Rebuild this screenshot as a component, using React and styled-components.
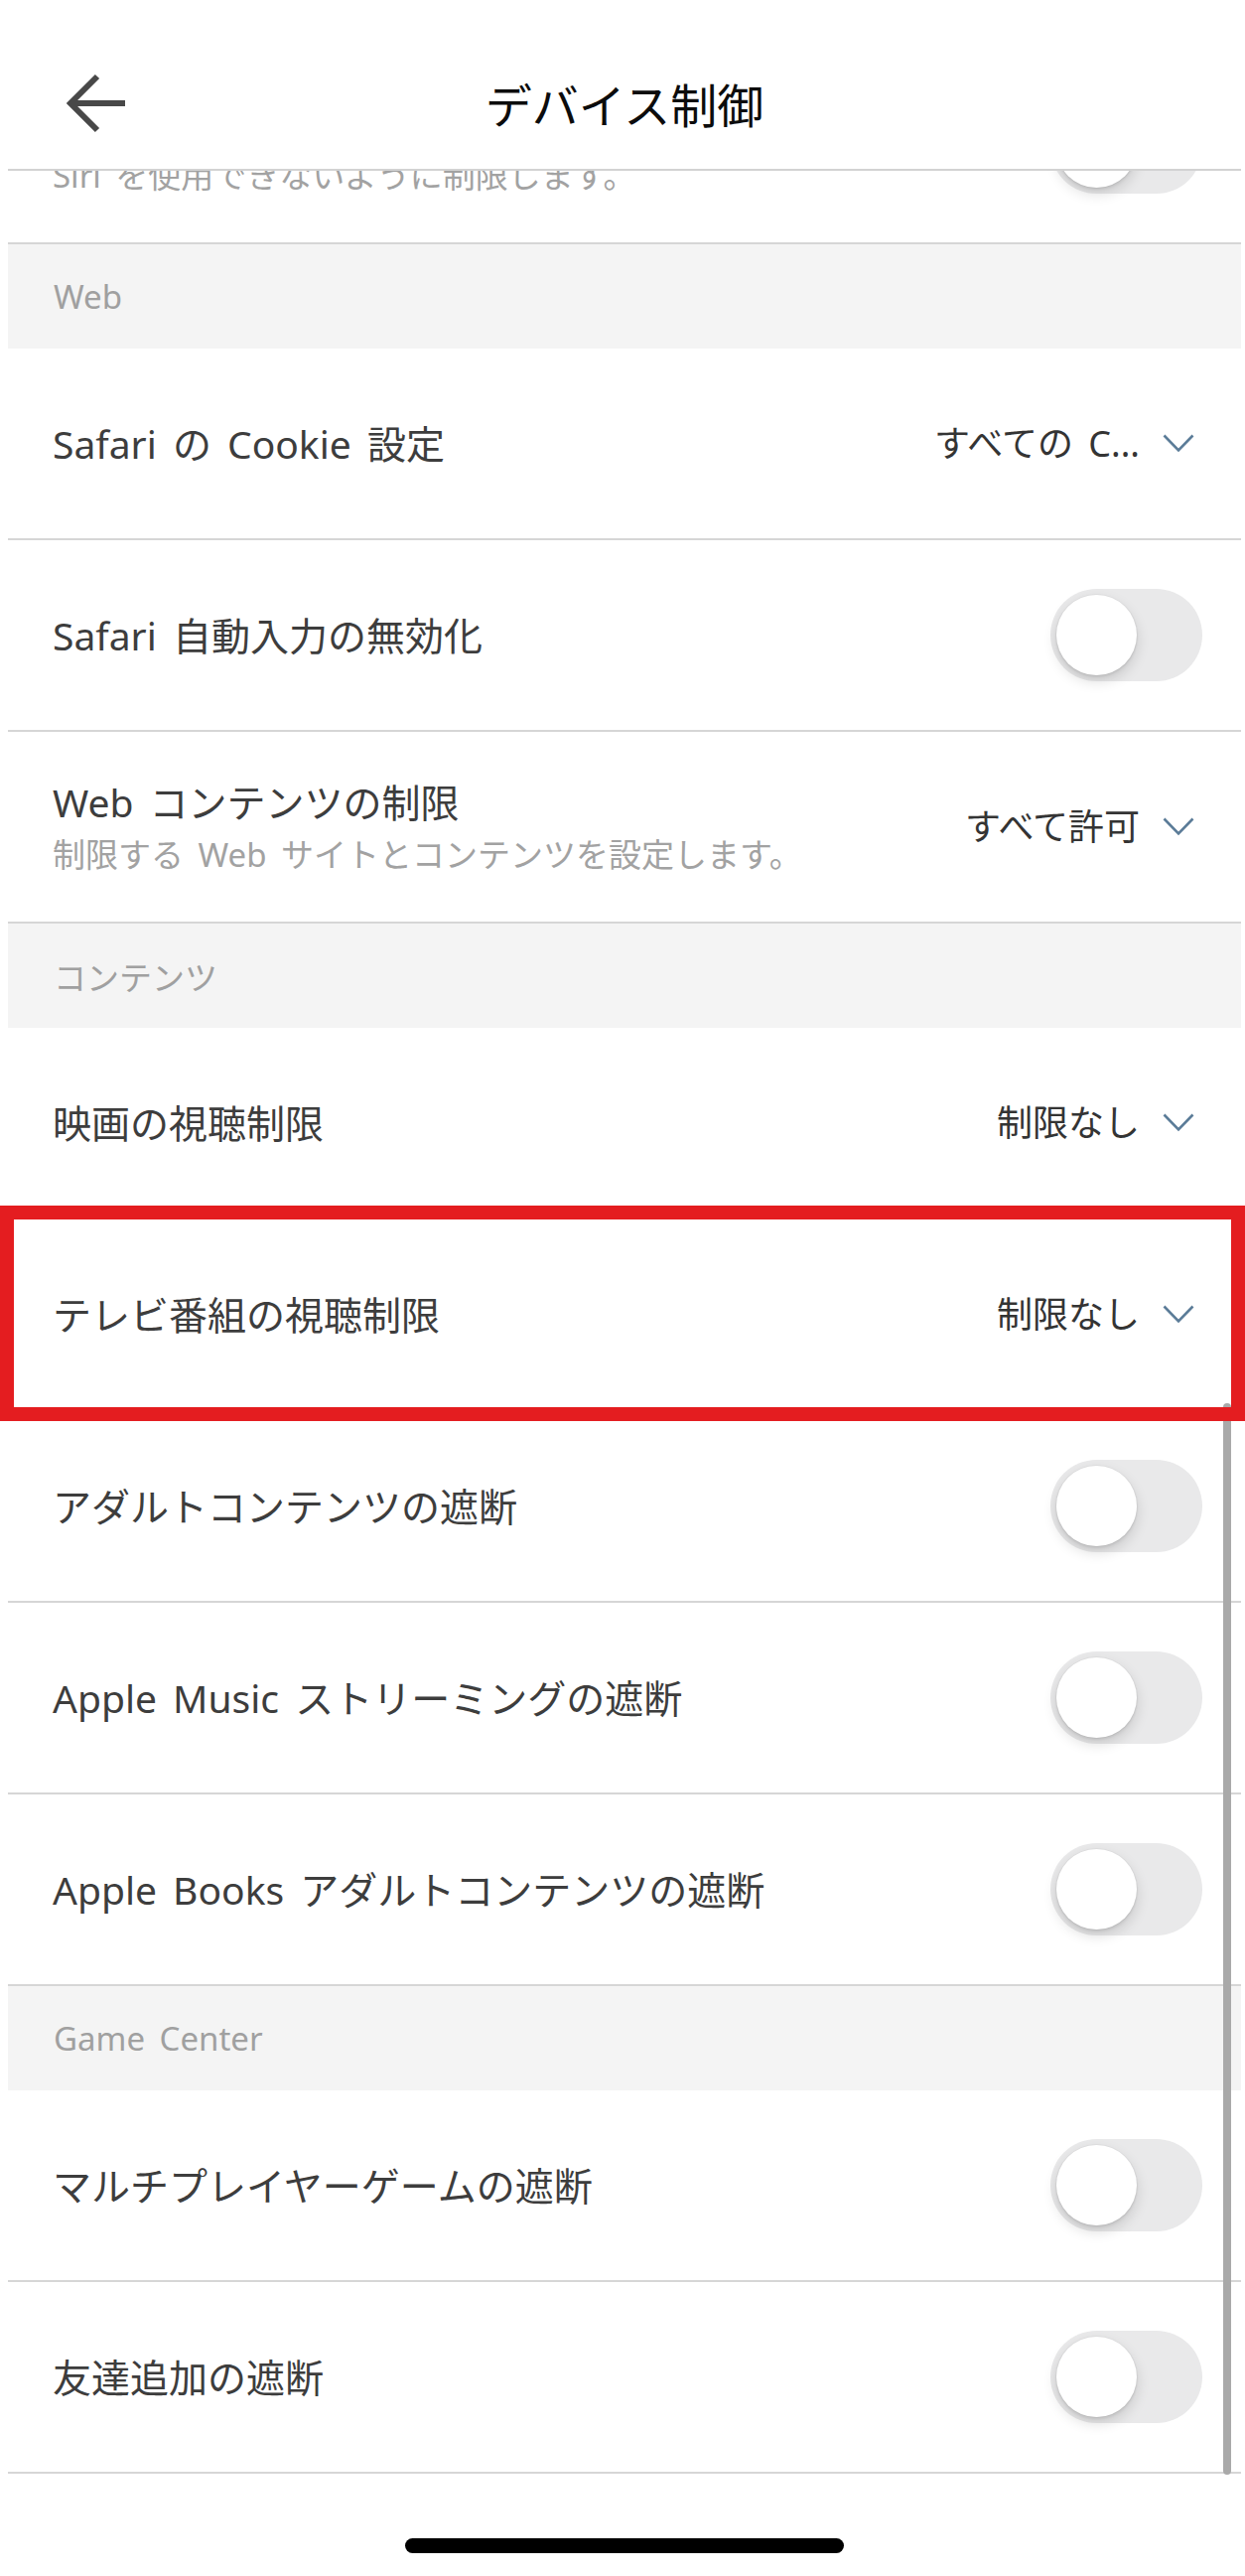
import React from "react";
import styled, { createGlobalStyle } from "styled-components";

const GlobalStyle = createGlobalStyle`
  html,
  body {
    margin: 0;
    padding: 0;
    background: #ffffff;
  }

  * {
    box-sizing: border-box;
  }
`;

const Page = styled.div`
  position: relative;
  width: 1254px;
  height: 2594px;
  padding: 0 4px 0 8px;
  display: flex;
  flex-direction: column;
  background: #ffffff;
  font-family: "Noto Sans", "Noto Sans CJK JP", sans-serif;
  word-spacing: 6px;
  overflow: hidden;
`;

const Header = styled.header`
  flex: none;
  height: 172px;
  padding-top: 38px;
  display: grid;
  grid-template-columns: 1fr auto 1fr;
  align-items: center;
  background: #ffffff;
  border-bottom: 2px solid #d2d2d2;
`;

const BackButton = styled.button`
  justify-self: start;
  margin-left: 57px;
  padding: 0;
  border: 0;
  background: none;
  display: flex;
`;

const Title = styled.h1`
  margin: 0;
  font-family: "Noto Sans CJK JP", sans-serif;
  font-size: 47px;
  font-weight: 400;
  line-height: 60px;
  color: #0c0c0c;
`;

const Viewport = styled.main`
  position: relative;
  flex: none;
  height: 2320px;
  overflow: hidden;
`;

const List = styled.div`
  margin-top: -119px;
`;

const SectionHeader = styled.div`
  height: 105px;
  padding-left: 46px;
  display: flex;
  align-items: center;
  background: #f4f4f4;
  font-size: 33px;
  color: #a0a0a0;
`;

const Row = styled.div`
  height: 193px;
  padding: 0 39px 0 45px;
  display: flex;
  align-items: center;
  justify-content: space-between;
  border-bottom: 2px solid #d6d6d6;
`;

const Labels = styled.div`
  display: flex;
  flex-direction: column;
  gap: 10px;
`;

const Label = styled.span`
  font-size: 39px;
  line-height: 46px;
  color: #3d3d3d;
`;

const Hint = styled.span`
  font-size: 33px;
  line-height: 40px;
  color: #a2a2a2;
`;

const Picker = styled.div`
  display: flex;
  align-items: center;
  gap: 23px;
  padding-right: 8px;
`;

const PickerValue = styled.span`
  font-size: 36px;
  line-height: 44px;
  color: #343434;
`;

const Track = styled.div`
  width: 153px;
  height: 93px;
  padding: 0 6px;
  display: flex;
  align-items: center;
  border-radius: 47px;
  background: #e9e9ea;
`;

const Knob = styled.div`
  width: 81px;
  height: 81px;
  border-radius: 50%;
  background: #ffffff;
  box-shadow: 0 6px 14px rgba(0, 0, 0, 0.14), 0 2px 3px rgba(0, 0, 0, 0.08),
    0 0 0 1px rgba(0, 0, 0, 0.03);
`;

const Scrollbar = styled.div`
  position: absolute;
  top: 1241px;
  right: 10px;
  width: 8px;
  height: 1079px;
  border-radius: 4px;
  background: #a9a9a9;
`;

const Highlight = styled.div`
  position: absolute;
  top: 1214px;
  left: 0;
  width: 1254px;
  height: 217px;
  border: 14px solid #e41d20;
  pointer-events: none;
`;

const Footer = styled.footer`
  flex: 1;
  display: flex;
  justify-content: center;
  padding-top: 64px;
`;

const HomeIndicator = styled.div`
  width: 442px;
  height: 15px;
  border-radius: 8px;
  background: #000000;
`;

function BackArrow() {
  return (
    <svg width="64" height="60" viewBox="0 0 64 60" fill="none">
      <path
        d="M33 3 L6 30 L33 57 M6 30 H61"
        stroke="#484848"
        strokeWidth="6"
        strokeLinejoin="miter"
      />
    </svg>
  );
}

function Chevron() {
  return (
    <svg width="32" height="19" viewBox="0 0 32 19" fill="none">
      <path d="M1.5 1.5 L16 16.5 L30.5 1.5" stroke="#5b7c98" strokeWidth="2.6" />
    </svg>
  );
}

function Toggle() {
  return (
    <Track>
      <Knob />
    </Track>
  );
}

const items = [
  { type: "toggle", label: "Siri の無効化", hint: "Siri を使用できないように制限します。" },
  { type: "section", label: "Web" },
  { type: "picker", label: "Safari の Cookie 設定", value: "すべての C..." },
  { type: "toggle", label: "Safari 自動入力の無効化" },
  {
    type: "picker",
    label: "Web コンテンツの制限",
    hint: "制限する Web サイトとコンテンツを設定します。",
    value: "すべて許可",
  },
  { type: "section", label: "コンテンツ" },
  { type: "picker", label: "映画の視聴制限", value: "制限なし" },
  { type: "picker", label: "テレビ番組の視聴制限", value: "制限なし" },
  { type: "toggle", label: "アダルトコンテンツの遮断" },
  { type: "toggle", label: "Apple Music ストリーミングの遮断" },
  { type: "toggle", label: "Apple Books アダルトコンテンツの遮断" },
  { type: "section", label: "Game Center" },
  { type: "toggle", label: "マルチプレイヤーゲームの遮断" },
  { type: "toggle", label: "友達追加の遮断" },
];

function SettingRow({ item }) {
  return (
    <Row>
      <Labels>
        <Label>{item.label}</Label>
        {item.hint && <Hint>{item.hint}</Hint>}
      </Labels>
      {item.type === "toggle" ? (
        <Toggle />
      ) : (
        <Picker>
          <PickerValue>{item.value}</PickerValue>
          <Chevron />
        </Picker>
      )}
    </Row>
  );
}

export default function App() {
  return (
    <>
      <GlobalStyle />
      <Page>
        <Header>
          <BackButton aria-label="戻る">
            <BackArrow />
          </BackButton>
          <Title>デバイス制御</Title>
          <span />
        </Header>
        <Viewport>
          <List>
            {items.map((item, i) =>
              item.type === "section" ? (
                <SectionHeader key={i}>{item.label}</SectionHeader>
              ) : (
                <SettingRow key={i} item={item} />
              )
            )}
          </List>
          <Scrollbar />
        </Viewport>
        <Footer>
          <HomeIndicator />
        </Footer>
        <Highlight />
      </Page>
    </>
  );
}
